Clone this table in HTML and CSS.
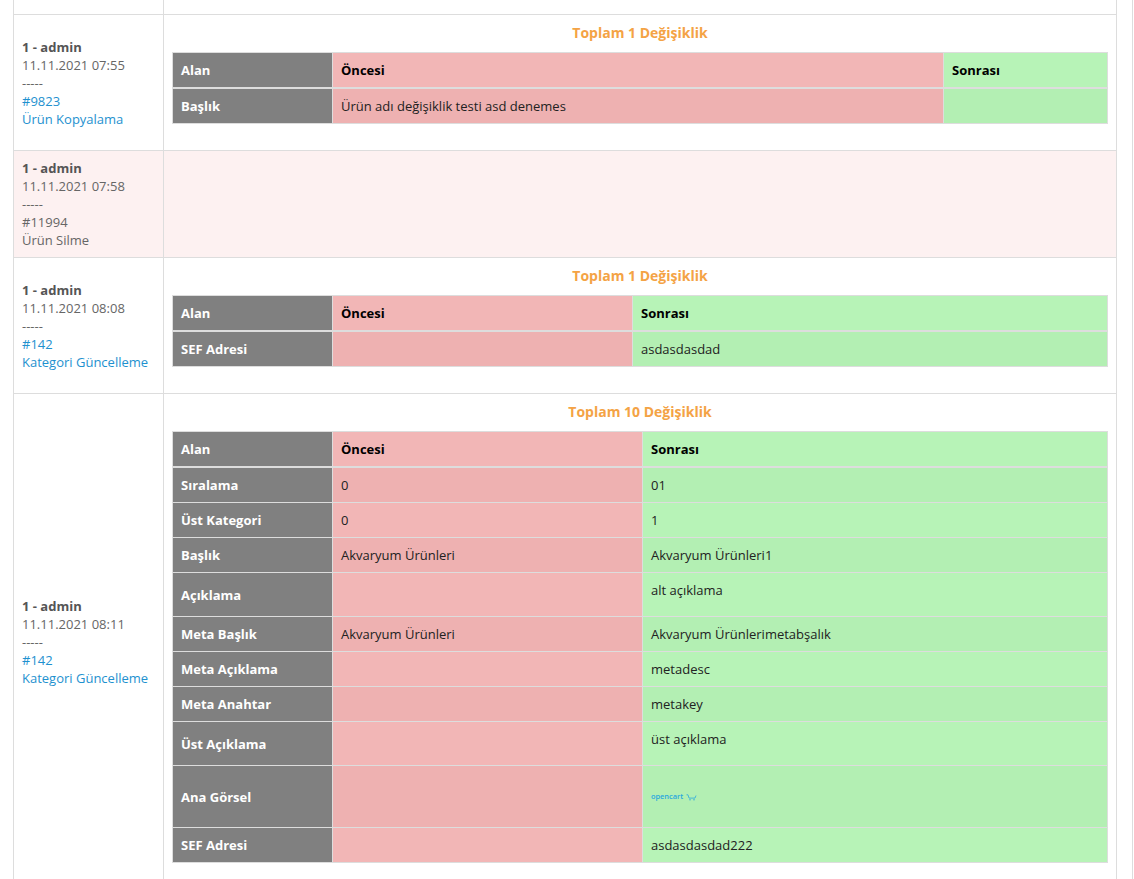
FILE: index.html
```html
<!DOCTYPE html>
<html lang="tr">
<head>
<meta charset="utf-8">
<title>Değişiklik Geçmişi</title>
<link rel="stylesheet" href="styles.css">
</head>
<body>
<div class="panel">
  <table class="log">
    <colgroup><col class="log-meta"><col class="log-body"></colgroup>
    <tbody>
      <tr class="log-row log-row--cut"><td></td><td></td></tr>

      <tr class="log-row">
        <td class="meta">
          <strong>1 - admin</strong><br>
          11.11.2021 07:55<br>
          -----<br>
          <a href="#">#9823</a><br>
          <a href="#">Ürün Kopyalama</a>
        </td>
        <td class="body">
          <div class="total">Toplam 1 Değişiklik</div>
          <table class="diff diff--a">
            <colgroup><col class="c-field"><col class="c-before"><col class="c-after"></colgroup>
            <thead>
              <tr><th class="field">Alan</th><th class="before">Öncesi</th><th class="after">Sonrası</th></tr>
            </thead>
            <tbody>
              <tr><td class="field">Başlık</td><td class="before">Ürün adı değişiklik testi asd denemes</td><td class="after"></td></tr>
            </tbody>
          </table>
        </td>
      </tr>

      <tr class="log-row log-row--deleted">
        <td class="meta">
          <strong>1 - admin</strong><br>
          11.11.2021 07:58<br>
          -----<br>
          #11994<br>
          Ürün Silme
        </td>
        <td class="body"></td>
      </tr>

      <tr class="log-row">
        <td class="meta">
          <strong>1 - admin</strong><br>
          11.11.2021 08:08<br>
          -----<br>
          <a href="#">#142</a><br>
          <a href="#">Kategori Güncelleme</a>
        </td>
        <td class="body">
          <div class="total">Toplam 1 Değişiklik</div>
          <table class="diff diff--b">
            <colgroup><col class="c-field"><col class="c-before"><col class="c-after"></colgroup>
            <thead>
              <tr><th class="field">Alan</th><th class="before">Öncesi</th><th class="after">Sonrası</th></tr>
            </thead>
            <tbody>
              <tr><td class="field">SEF Adresi</td><td class="before"></td><td class="after">asdasdasdad</td></tr>
            </tbody>
          </table>
        </td>
      </tr>

      <tr class="log-row">
        <td class="meta">
          <strong>1 - admin</strong><br>
          11.11.2021 08:11<br>
          -----<br>
          <a href="#">#142</a><br>
          <a href="#">Kategori Güncelleme</a>
        </td>
        <td class="body">
          <div class="total">Toplam 10 Değişiklik</div>
          <table class="diff diff--c">
            <colgroup><col class="c-field"><col class="c-before"><col class="c-after"></colgroup>
            <thead>
              <tr><th class="field">Alan</th><th class="before">Öncesi</th><th class="after">Sonrası</th></tr>
            </thead>
            <tbody>
              <tr><td class="field">Sıralama</td><td class="before">0</td><td class="after">01</td></tr>
              <tr><td class="field">Üst Kategori</td><td class="before">0</td><td class="after">1</td></tr>
              <tr><td class="field">Başlık</td><td class="before">Akvaryum Ürünleri</td><td class="after">Akvaryum Ürünleri1</td></tr>
              <tr><td class="field">Açıklama</td><td class="before"></td><td class="after"><p>alt açıklama</p></td></tr>
              <tr><td class="field">Meta Başlık</td><td class="before">Akvaryum Ürünleri</td><td class="after">Akvaryum Ürünlerimetabşalık</td></tr>
              <tr><td class="field">Meta Açıklama</td><td class="before"></td><td class="after">metadesc</td></tr>
              <tr><td class="field">Meta Anahtar</td><td class="before"></td><td class="after">metakey</td></tr>
              <tr><td class="field">Üst Açıklama</td><td class="before"></td><td class="after"><p>üst açıklama</p></td></tr>
              <tr><td class="field">Ana Görsel</td><td class="before"></td><td class="after">
                <svg class="thumb" viewBox="0 0 48 40" width="48" height="40" aria-label="opencart">
                  <text x="0" y="25" class="thumb-text">opencart</text>
                  <path d="M35.5 20.8 H37 L38 24.1 H44 L45 21.5" fill="none" stroke="#29a8df" stroke-width="0.8"/>
                  <circle cx="39" cy="25.7" r="0.7" fill="#29a8df"/>
                  <circle cx="43" cy="25.7" r="0.7" fill="#29a8df"/>
                </svg>
              </td></tr>
              <tr><td class="field">SEF Adresi</td><td class="before"></td><td class="after">asdasdasdad222</td></tr>
            </tbody>
          </table>
        </td>
      </tr>
    </tbody>
  </table>
</div>
</body>
</html>
```

FILE: styles.css
```css
html, body {
  margin: 0;
  padding: 0;
  background: #fff;
}
body {
  font-family: "Open Sans", "Noto Sans", sans-serif;
  font-size: 13px;
  line-height: 18px;
  color: #666;
  overflow: hidden;
}
.panel {
  width: 1104px;
  padding: 0 15px 0 13px;
  border-right: 1px solid #ddd;
  min-height: 879px;
}
.log {
  width: 1104px;
  border-collapse: collapse;
  table-layout: fixed;
}
.log-meta { width: 150px; }
.log > tbody > tr > td {
  border: 1px solid #ddd;
  padding: 8px;
}
.log-row--cut > td {
  border-top: none !important;
  height: 14px;
  padding: 0 !important;
}
.log-row--deleted > td { background: #fdf1f1; }
.meta {
  vertical-align: middle;
  color: #666;
}
.meta strong { color: #555; font-weight: 700; }
.meta a { color: #1e91cf; text-decoration: none; }
.body { vertical-align: top; }
.total {
  text-align: center;
  color: #f4a345;
  font-weight: 700;
  font-size: 14px;
  line-height: 20px;
  margin: 0 0 9px;
}
.diff {
  width: 936px;
  border-collapse: collapse;
  table-layout: fixed;
  margin-bottom: 18px;
  color: #222;
}
.diff th, .diff td {
  border: 1px solid #ddd;
  padding: 8px;
  text-align: left;
  vertical-align: middle;
  line-height: 18px;
}
.diff thead th {
  border-bottom: 2px solid #ddd;
  font-weight: 700;
  color: #000;
}
.diff p { margin: 0 0 9px; }
.c-field { width: 160px; }
.diff--a .c-before { width: 611px; }
.diff--b .c-before { width: 300px; }
.diff--c .c-before { width: 310px; }
.diff .field {
  background: #808080;
  color: #fff;
  font-weight: 700;
}
.diff .before { background: #f2b6b6; }
.diff .after { background: #b7f3b7; }
.diff tbody tr:nth-child(odd) .before { background: #eeb1b1; }
.diff tbody tr:nth-child(odd) .after { background: #b3efb3; }
.thumb {
  display: block;
  margin-bottom: 5px;
}
.thumb-text {
  font-family: "Open Sans", sans-serif;
  font-weight: 600;
  font-size: 7.4px;
  fill: #29a8df;
}
```
